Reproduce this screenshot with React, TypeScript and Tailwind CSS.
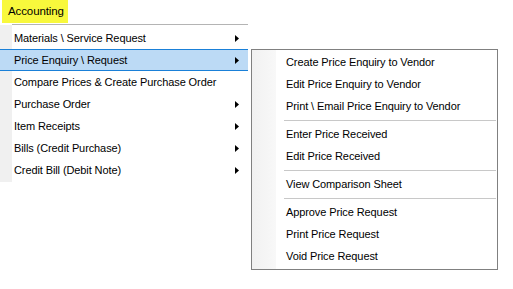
const mainItems = [
  { label: 'Materials \\ Service Request', sub: true },
  { label: 'Price Enquiry \\ Request', sub: true, active: true },
  { label: 'Compare Prices & Create Purchase Order', sub: false },
  { label: 'Purchase Order', sub: true },
  { label: 'Item Receipts', sub: true },
  { label: 'Bills (Credit Purchase)', sub: true },
  { label: 'Credit Bill (Debit Note)', sub: true },
];

const subGroups = [
  ['Create Price Enquiry to Vendor', 'Edit Price Enquiry to Vendor', 'Print \\ Email Price Enquiry to Vendor'],
  ['Enter Price Received', 'Edit Price Received'],
  ['View Comparison Sheet'],
  ['Approve Price Request', 'Print Price Request', 'Void Price Request'],
];

function Arrow() {
  return (
    <svg width="4" height="7" viewBox="0 0 4 7" className="shrink-0">
      <path d="M0 0 L4 3.5 L0 7 Z" fill="#000" />
    </svg>
  );
}

export default function App() {
  return (
    <div
      className="relative w-[513px] h-[289px] bg-white text-[11px] tracking-[-0.1px] text-black overflow-hidden"
      style={{ fontFamily: '"Liberation Sans", Arial, sans-serif' }}
    >
      {/* menu bar */}
      <div className="h-[24px] flex items-start pl-[2px]">
        <div className="h-[23px] w-[66px] bg-[#f8f83c] flex items-center pl-[6px] text-[11.5px]">Accounting</div>
      </div>

      {/* dropdown */}
      <div className="w-[248px] flex flex-col">
        <div className="h-px ml-[12px] bg-[#b4b4b4]" />
        <div className="flex flex-col bg-[linear-gradient(to_right,#f0f0f0_12px,#ffffff_12px)] pt-[2px] pb-px">
          {mainItems.map((it) => (
            <div
              key={it.label}
              className={
                'h-[22px] flex items-center pl-[14px] pr-[9px] ' +
                (it.active ? 'bg-[#bcdaf5] border-y border-[#1a80d8]' : '')
              }
            >
              <span className="flex-1 whitespace-nowrap">{it.label}</span>
              {it.sub && <Arrow />}
            </div>
          ))}
        </div>
      </div>

      {/* submenu */}
      <div className="absolute left-[251px] top-[49px] w-[247px] h-[221px] border border-[#808080] bg-white flex">
        <div className="w-[24px] bg-[linear-gradient(to_right,#f1f1f1,#f8f8f8)]" />
        <div className="flex-1 flex flex-col py-px">
          {subGroups.map((g, gi) => (
            <div key={gi} className="flex flex-col">
              {gi > 0 && (
                <div className="h-[6px] flex items-center pl-[8px] pr-px">
                  <div className="h-px w-full bg-[#c8c8c8]" />
                </div>
              )}
              {g.map((s) => (
                <div key={s} className="h-[22px] flex items-center pl-[10px] whitespace-nowrap">
                  {s}
                </div>
              ))}
            </div>
          ))}
        </div>
      </div>
    </div>
  );
}
